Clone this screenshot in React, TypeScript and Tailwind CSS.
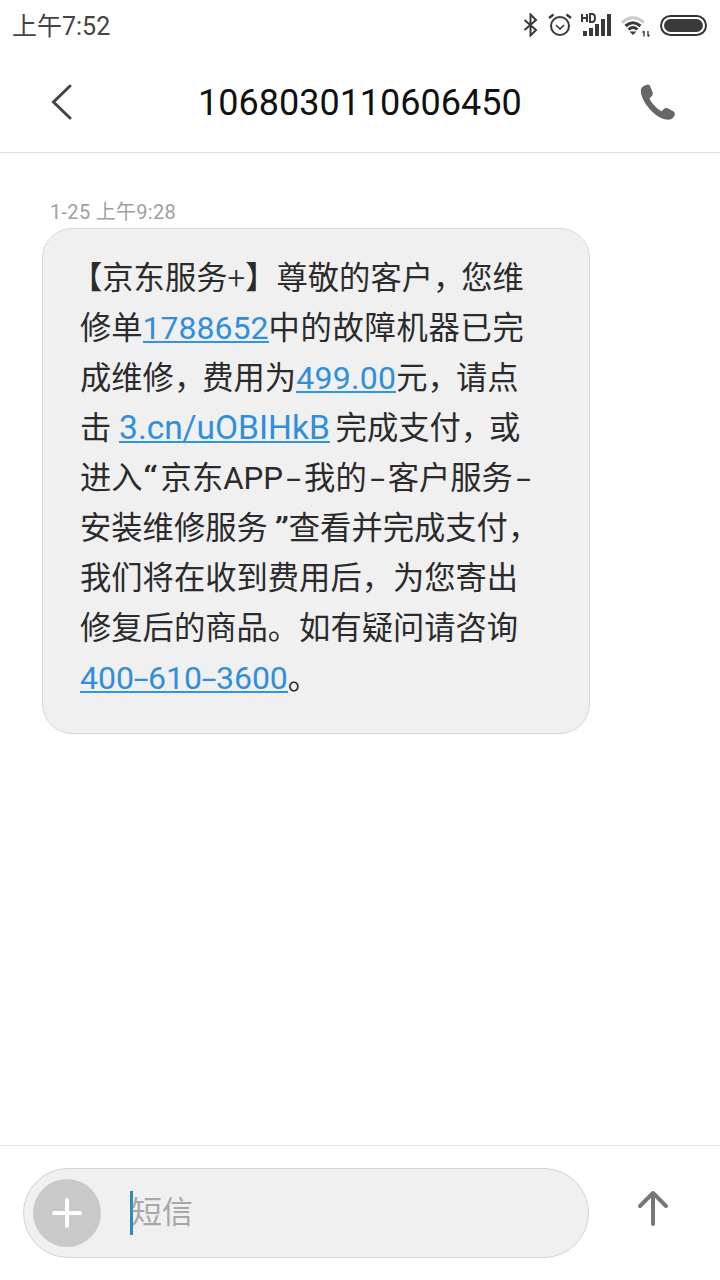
const Hyphen = ({ className }: { className?: string }) => {
    return <span className={"inline-block scale-x-[1.700] text-center " + (className ?? "w-[21px]")}>-</span>;
};

const Comma = () => {
    return <span className="-mr-[3px]">，</span>;
};

const StatusIcons = () => {
    return (
        <div className="mb-[2px] flex items-center gap-[8px] pr-[13px]">
            {/* Bluetooth */}
            <svg width="16" height="24" viewBox="0 0 16 24" fill="none" stroke="#3a3a3a" strokeWidth="2">
                <path d="M1.500 7 L13 17 L7.500 22.500 V1.500 L13 7 L1.500 17" />
            </svg>
            {/* Alarm */}
            <svg width="26" height="26" viewBox="0 0 26 26" fill="none" stroke="#3a3a3a" strokeWidth="2">
                <circle cx="13" cy="14" r="9" />
                <path d="M9 13 L13 17 L17 13" strokeWidth="1.600" />
                <path d="M2 6 L6.500 2.500 M24 6 L19.500 2.500" strokeWidth="2.400" />
            </svg>
            {/* HD signal */}
            <svg width="30" height="26" viewBox="0 0 30 26">
                <rect x="2" y="19" width="4" height="5" fill="#3a3a3a" />
                <rect x="8" y="16" width="4" height="8" fill="#3a3a3a" />
                <rect x="14" y="12" width="4" height="12" fill="#3a3a3a" />
                <rect x="20" y="7" width="4" height="17" fill="#3a3a3a" />
                <rect x="26" y="2" width="4" height="22" fill="#3a3a3a" />
                <path d="M1 2 V10 M1 6 H6 M6 2 V10" stroke="#3a3a3a" strokeWidth="2" fill="none" />
                <path d="M9 2 V10 H11 Q14 10 14 6 Q14 2 11 2 Z" stroke="#3a3a3a" strokeWidth="2" fill="none" />
            </svg>
            {/* Wifi */}
            <svg width="29" height="24" viewBox="0 0 29 24" fill="none" className="ml-[2px]">
                <path d="M1 9.500 Q12 0 23 9.500" stroke="#c9c9c9" strokeWidth="3" />
                <path d="M4.500 13 Q12 6.500 19.500 13" stroke="#3a3a3a" strokeWidth="3" />
                <path d="M7.500 16.500 Q12 12.500 16.500 16.500" stroke="#3a3a3a" strokeWidth="3" />
                <path d="M8.500 18.500 H15.500 L12 22 Z" fill="#3a3a3a" />
                <path d="M23 18 V23.500 M21.500 19.500 L23 18 M27 18 V23.500 M28.500 22 L27 23.500" stroke="#3a3a3a" strokeWidth="1.400" />
            </svg>
            {/* Battery */}
            <div className="ml-[2px] h-[21px] w-[47px] rounded-full border-2 border-[#333] p-[2px]">
                <div className="h-full w-full rounded-full bg-[#3a3a3a]" />
            </div>
        </div>
    );
};

const Link = ({ children, className }: { children: React.ReactNode; className?: string }) => {
    return (
        <span className={"inline-block border-b-2 border-[#2f96e0] text-[32px] leading-[26px] text-[#2f8fdc] " + (className ?? "")}>
            {children}
        </span>
    );
};

export default function App() {
    return (
        <div className="flex h-[1280px] w-[720px] flex-col overflow-hidden bg-white font-['Roboto','Noto_Sans_CJK_SC',sans-serif]">
            {/* Status bar */}
            <div className="flex h-[52px] items-center justify-between">
                <span className="ml-[12px] mt-[2px] text-[25px] text-[#444]">上午7:52</span>
                <StatusIcons />
            </div>

            {/* Header */}
            <div className="flex h-[101px] items-center border-b border-[#dedede]">
                <svg width="24" height="36" viewBox="0 0 24 36" fill="none" stroke="#444" strokeWidth="3" strokeLinecap="round" className="ml-[50px]">
                    <path d="M20 2 L3.500 18 L20 34" />
                </svg>
                <div className="ml-[124px] mt-[2px] text-[36px] leading-none text-[#111]">1068030110606450</div>
                <svg width="40" height="40" viewBox="0 0 24 24" fill="#666" className="ml-auto mr-[43px]">
                    <path d="M6.600 1.500 C5.300 1.700 3.100 2.600 2.500 4 C1.800 6 3 10 6 14.200 C9.500 19 14.500 22.600 19 22.600 C20.800 22.600 22.500 21 22.700 19.500 C22.800 18.700 22.400 18 21.700 17.600 L18.400 15.800 C17.600 15.400 16.700 15.500 16.100 16.200 L14.800 17.500 C12 16.300 8.600 12.800 7.500 9.800 L8.800 8.500 C9.500 7.800 9.600 7 9.300 6.200 L8 2.700 C7.800 2 7.200 1.500 6.600 1.500 Z" />
                </svg>
            </div>

            {/* Messages */}
            <div className="flex-1 pl-[42px] pt-[46px]">
                <div className="pl-[8px] text-[20px] leading-[26px] tracking-[0.3px] text-[#a0a0a0]">1-25 上午9:28</div>
                <div className="mt-[3px] h-[506px] w-[548px] rounded-[30px] border border-[#d8d8d8] bg-[#f0f0f1] pl-[37px] pt-[25px] text-[31.3px] leading-[50px] text-[#2b2b2b] whitespace-nowrap">
                    <div className="-ml-[9px]">【京东服务<span className="font-light">+</span>】尊敬的客户<Comma />您维</div>
                    <div>修单<Link>1788652</Link><span className="tracking-[0.7px]">中的故障机器已完</span></div>
                    <div>成维修<Comma />费用为<Link className="tracking-[0.3px]">499.00</Link>元<Comma />请点</div>
                    <div>击 <Link className="text-[33.5px]">3.cn/uOBIHkB</Link><span className="-ml-[2px]"> 完成支付<Comma />或</span></div>
                    <div>进入<span className="inline-block w-[18px] origin-left scale-x-[1.300] text-left">“</span>京东APP<Hyphen />我的<Hyphen />客户服务<Hyphen /></div>
                    <div>安装维修服务<span className="inline-block w-[21px] origin-right scale-x-[1.300] text-right">”</span>查看并完成支付，</div>
                    <div>我们将在收到费用后，为您寄出</div>
                    <div>修复后的商品。如有疑问请咨询</div>
                    <div><Link>400<Hyphen className="w-[14px]" />610<Hyphen className="w-[14px]" />3600</Link>。</div>
                </div>
            </div>

            {/* Input bar */}
            <div className="flex h-[135px] items-start border-t border-[#e2e2e2] pl-[23px] pt-[22px]">
                <div className="flex h-[90px] w-[566px] items-center rounded-full border border-[#d4d4d4] bg-[#f0f0f1] pl-[9px]">
                    <div className="flex h-[68px] w-[68px] items-center justify-center rounded-full bg-[#c9c9c9]">
                        <svg width="30" height="30" viewBox="0 0 30 30" stroke="#fff" strokeWidth="4" strokeLinecap="round">
                            <path d="M15 2 V28 M2 15 H28" />
                        </svg>
                    </div>
                    <div className="ml-[29px] h-[44px] w-[3px] bg-[#2a8fb5]" />
                    <span className="-ml-[2px] text-[31px] text-[#a8a8a8]">短信</span>
                </div>
                <svg width="32" height="36" viewBox="0 0 32 36" fill="none" stroke="#777" strokeWidth="4" strokeLinecap="round" strokeLinejoin="round" className="ml-[48px] mt-[22px]">
                    <path d="M16 34 V3 M3 16 L16 3 L29 16" />
                </svg>
            </div>
        </div>
    );
}
